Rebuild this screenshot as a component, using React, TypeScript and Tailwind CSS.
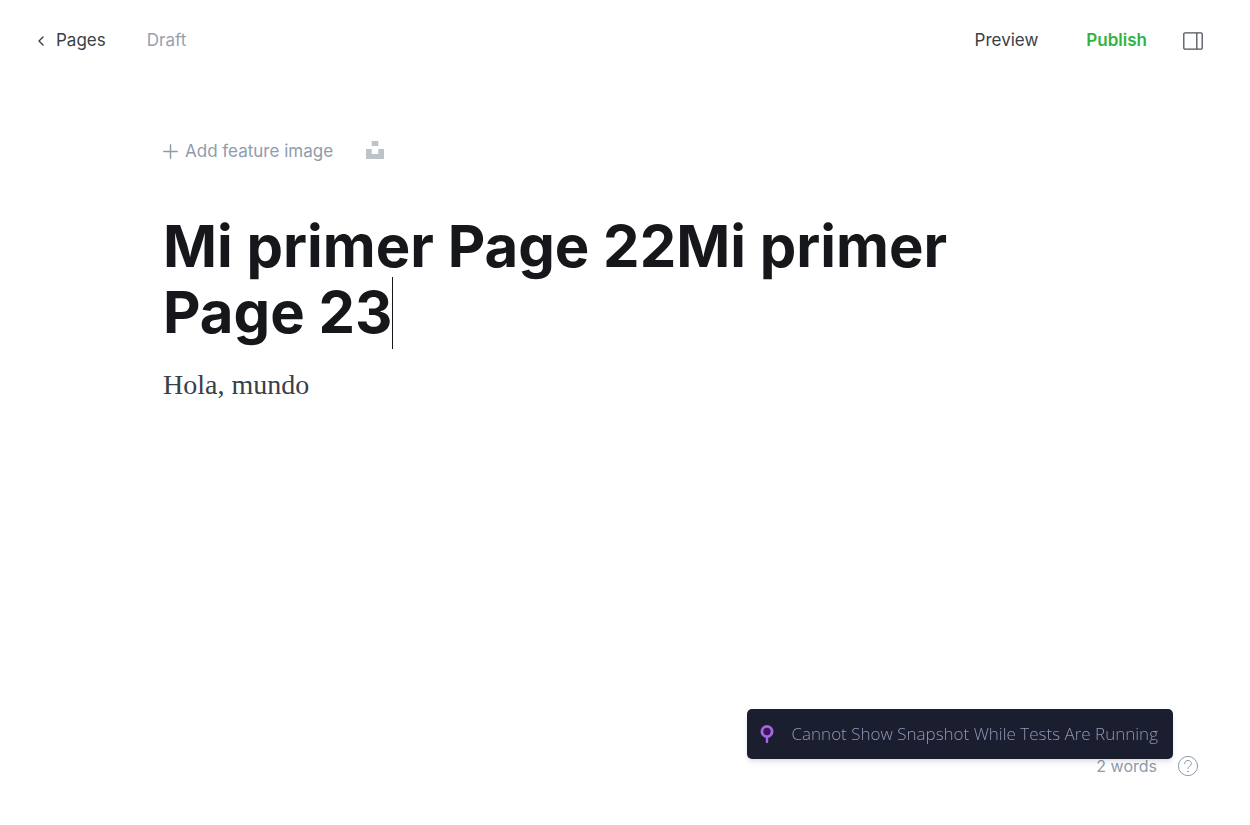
import { useState } from "react";

const title = "Mi primer Page 22Mi primer Page 23";

function Header() {
  return (
    <header className="flex h-20 items-center justify-between pr-[47px] pl-[37px] text-[17px] leading-6">
      <div className="flex items-center gap-[41px]">
        <a href="#pages" className="flex items-center gap-[11px] text-[#394047]">
          <svg className="mt-0.5 h-[10px] w-2" viewBox="0 0 8 10" fill="none" stroke="currentColor" strokeWidth="1.4" aria-hidden="true">
            <path d="M6 1 L2 5 L6 9" strokeLinecap="round" strokeLinejoin="round" />
          </svg>
          <span>Pages</span>
        </a>
        <span className="text-[#95a1ad]">Draft</span>
      </div>
      <div className="flex items-center">
        <button type="button" className="mr-12 text-[#394047]">Preview</button>
        <button type="button" className="mr-9 font-semibold text-[#30b43f]">Publish</button>
        <button type="button" aria-label="Settings" className="mt-0.5 text-[#4c545c]">
          <svg className="h-[18px] w-5" viewBox="0 0 20 18" fill="none" stroke="currentColor" strokeWidth="1.3" aria-hidden="true">
            <rect x="0.8" y="0.8" width="18.4" height="16.4" rx="1.2" />
            <path d="M13.8 1V17" />
          </svg>
        </button>
      </div>
    </header>
  );
}

function TitleField() {
  const [value, setValue] = useState(title);
  return (
    <div className="mt-[50px] grid text-[58px] leading-[66px] font-bold text-[#15171a]">
      <textarea
        aria-label="Page title"
        value={value}
        onChange={(e) => setValue(e.target.value)}
        rows={2}
        className="col-start-1 row-start-1 w-full resize-none overflow-hidden bg-transparent pb-2 caret-transparent outline-none"
      />
      <div aria-hidden="true" className="pointer-events-none col-start-1 row-start-1 break-words whitespace-pre-wrap">
        <span className="invisible">{value}</span>
        <span className="relative">
          <span className="absolute top-0 left-0 h-[72px] w-px bg-[#15171a]" />
        </span>
      </div>
    </div>
  );
}

function Toast() {
  return (
    <div role="status" className="fixed right-[77px] bottom-[66px] flex h-[50px] items-center gap-[18px] rounded-[5px] bg-[#1b1e2e] pr-[15px] pl-[13px] shadow-md">
      <svg className="h-[18px] w-[14px]" viewBox="0 0 14 18" fill="none" aria-hidden="true">
        <path d="M7 11V17" stroke="#a368e3" strokeWidth="2.4" strokeLinecap="round" />
        <circle cx="7" cy="6.5" r="5.1" fill="#42145f" stroke="#a368e3" strokeWidth="2.8" />
      </svg>
      <span className="font-['Open_Sans',sans-serif] text-[17px] leading-6 font-light whitespace-nowrap text-[#9298b8]">
        Cannot Show Snapshot While Tests Are Running
      </span>
    </div>
  );
}

export default function App() {
  const [body, setBody] = useState("Hola, mundo");
  return (
    <div className="flex min-h-screen flex-col bg-white font-['Inter',sans-serif]">
      <Header />
      <main className="mx-[163px] flex-1 pt-[59px]">
        <div className="flex items-center gap-[33px] text-[17px] leading-6 text-[#8e9cac]">
          <button type="button" className="flex items-center gap-[7px]">
            <svg className="h-[15px] w-[15px]" viewBox="0 0 15 15" fill="none" stroke="currentColor" strokeWidth="1.5" strokeLinecap="round" aria-hidden="true">
              <path d="M7.5 0.8V14.2M0.8 7.5H14.2" />
            </svg>
            <span>Add feature image</span>
          </button>
          <button type="button" aria-label="Choose an Unsplash photo" className="mb-0.5 text-[#bcc4cb]">
            <svg className="h-[18px] w-[18px]" viewBox="0 0 18 18" fill="currentColor" aria-hidden="true">
              <path d="M5.7 0H12.3V5H5.7ZM0 8H5.7V13H12.3V8H18V18H0Z" />
            </svg>
          </button>
        </div>
        <TitleField />
        <textarea
          aria-label="Page content"
          value={body}
          onChange={(e) => setBody(e.target.value)}
          rows={4}
          className="mt-3.5 block w-full resize-none overflow-hidden bg-transparent font-['Liberation_Serif',serif] text-[28px] leading-9 text-[#394047] outline-none"
        />
      </main>
      <footer className="flex items-center justify-end gap-5 pr-[51px] pb-[47px] text-[16px] leading-6 text-[#8e9cac]">
        <span>2 words</span>
        <button type="button" aria-label="Help">
          <svg className="h-[22px] w-[22px]" viewBox="0 0 22 22" fill="none" stroke="currentColor" strokeWidth="1" strokeLinecap="round" strokeLinejoin="round" aria-hidden="true">
            <circle cx="11" cy="11" r="9.6" />
            <path d="M7.6 8.7C7.6 6.7 9.1 5.4 11 5.4S14.4 6.8 14.4 8.6C14.4 11.1 11 11 11 13.7" />
            <circle cx="11" cy="16.4" r="0.3" fill="currentColor" />
          </svg>
        </button>
      </footer>
      <Toast />
    </div>
  );
}
